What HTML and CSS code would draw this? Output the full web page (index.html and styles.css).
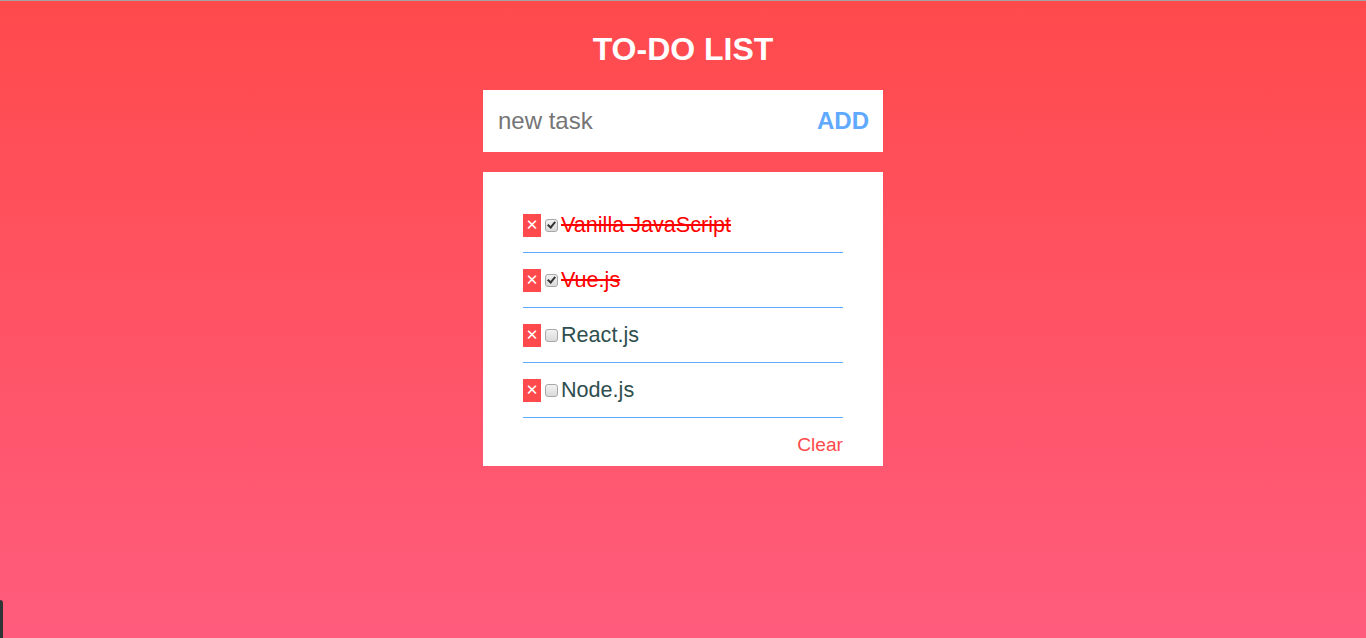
FILE: index.html
```html
<!DOCTYPE html>
<html lang="en">
<head>
<meta charset="utf-8">
<title>TO-DO LIST</title>
<link rel="stylesheet" href="styles.css">
</head>
<body>
<main class="app">
  <h1 class="title">TO-DO LIST</h1>
  <form class="add-form">
    <input class="add-input" type="text" placeholder="new task">
    <button class="add-btn" type="button">ADD</button>
  </form>
  <section class="card">
    <ul class="tasks">
      <li class="task done"><button class="del" type="button">&#x2715;</button><input class="check" type="checkbox" checked><span class="label">Vanilla JavaScript</span></li>
      <li class="task done"><button class="del" type="button">&#x2715;</button><input class="check" type="checkbox" checked><span class="label">Vue.js</span></li>
      <li class="task"><button class="del" type="button">&#x2715;</button><input class="check" type="checkbox"><span class="label">React.js</span></li>
      <li class="task"><button class="del" type="button">&#x2715;</button><input class="check" type="checkbox"><span class="label">Node.js</span></li>
    </ul>
    <div class="footer"><button class="clear" type="button">Clear</button></div>
  </section>
</main>
<div class="corner-tab"></div>
</body>
</html>
```

FILE: styles.css
```css
html, body {
  margin: 0;
  padding: 0;
}
body {
  height: 638px;
  box-sizing: border-box;
  border-top: 1px solid #a3a3a3;
  background: linear-gradient(180deg, #ff4a4c 0%, #ff5c7d 100%);
  font-family: "Liberation Sans", Arial, sans-serif;
  overflow: hidden;
  position: relative;
}
.app {
  width: 400px;
  margin: 0 auto;
  display: flex;
  flex-direction: column;
}
.title {
  margin: 30px 0 0;
  font-size: 32px;
  line-height: 37px;
  font-weight: bold;
  color: #fff;
  text-align: center;
}
.add-form {
  margin-top: 22px;
  height: 62px;
  background: #fff;
  display: flex;
  align-items: center;
  padding: 0 14px 0 15px;
}
.add-input {
  flex: 1;
  border: 0;
  outline: 0;
  padding: 0;
  font-family: "Liberation Sans", Arial, sans-serif;
  font-size: 24px;
  color: #333;
  background: transparent;
  min-width: 0;
}
.add-input::placeholder {
  color: #757575;
}
.add-btn {
  border: 0;
  background: transparent;
  padding: 0;
  font-family: "Liberation Sans", Arial, sans-serif;
  font-size: 24px;
  font-weight: bold;
  color: #5fa9ff;
  cursor: pointer;
}
.card {
  margin-top: 20px;
  background: #fff;
  padding: 26px 40px 10px;
}
.tasks {
  list-style: none;
  margin: 0;
  padding: 0;
}
.task {
  height: 54px;
  border-bottom: 1px solid #5fa9ff;
  display: flex;
  align-items: center;
}
.del {
  width: 18px;
  height: 23px;
  border: 0;
  padding: 0;
  background: #ff4a4d;
  color: #fff;
  font-family: "DejaVu Sans", sans-serif;
  font-size: 15px;
  line-height: 23px;
  text-align: center;
  cursor: pointer;
}
.check {
  -webkit-appearance: none;
  appearance: none;
  width: 13px;
  height: 13px;
  margin: 0 3px 0 4px;
  box-sizing: border-box;
  border: 1px solid #a8a8a8;
  border-radius: 3px;
  background: linear-gradient(180deg, #f2f2f2, #dadada);
  position: relative;
  flex: none;
}
.check:checked::after {
  content: "";
  position: absolute;
  left: 3px;
  top: 0px;
  width: 3px;
  height: 6px;
  border-right: 2px solid #333;
  border-bottom: 2px solid #333;
  transform: rotate(40deg);
}
.label {
  font-size: 21.6px;
  color: #2f4f4f;
}
.task.done .label {
  color: #ff0000;
  text-decoration: line-through;
}
.footer {
  margin-top: 16px;
  display: flex;
  justify-content: flex-end;
}
.clear {
  border: 0;
  background: transparent;
  padding: 0;
  font-family: "Liberation Sans", Arial, sans-serif;
  font-size: 19.2px;
  line-height: 22px;
  color: #ff4a4d;
  cursor: pointer;
}
.corner-tab {
  position: absolute;
  left: -4px;
  bottom: -6px;
  width: 7px;
  height: 44px;
  background: #2f3436;
  border-radius: 3px;
}
```
